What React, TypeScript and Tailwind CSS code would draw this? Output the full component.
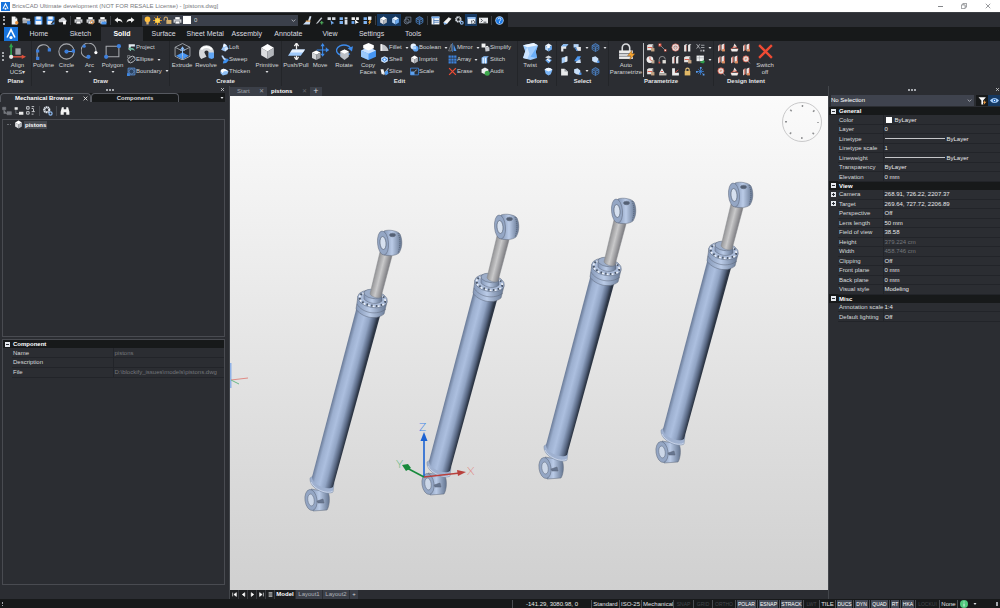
import type { ReactNode } from "react";
import clsx from "clsx";

const isoCube = (
  <>
    <path d="M8 1 14 4.4 8 8 2 4.4Z" fill="#fff" />
    <path d="M2 4.4 8 8v7L2 11.6Z" fill="#dcdde0" />
    <path d="M14 4.4 8 8v7l6-3.4Z" fill="#b3b6bb" />
  </>
);

const blueCube = (
  <>
    <path d="M8 1 14 4.4 8 8 2 4.4Z" fill="#e9f3ff" />
    <path d="M2 4.4 8 8v7L2 11.6Z" fill="#b5d6fb" />
    <path d="M14 4.4 8 8v7l6-3.4Z" fill="#6aa9f0" />
  </>
);

const printer = (
  <>
    <path d="M4 2h8v4H4Z" fill="#fff" />
    <path d="M1 6h14v6H1Z" fill="#d4d6da" />
    <path d="M4 9h8v5H4Z" fill="#fff" stroke="#4b4e55" />
  </>
);

const partBase = (
  <>
    <path d="M2 4 5 2h8l-2 3v8H2Z" fill="#e6e4e2" />
    <path d="M11 5l2-3v8l-2 3Z" fill="#a9a6a4" />
  </>
);

const icons: Record<string, ReactNode> = {
  brand: (
    <>
      <path d="M0 0h16v16H0Z" fill="#1673dc" />
      <path d="M3.500 12 8 3l4.500 9" fill="none" stroke="#fff" strokeWidth="1.800" />
      <circle cx="8" cy="12" r="1.800" fill="#fff" />
    </>
  ),
  newFile: (
    <>
      <path d="M3 1h6l4 4v10H3Z" fill="#f4f4f4" />
      <path d="M9 1v4h4Z" fill="#9a9da3" />
      <circle cx="12" cy="12" r="3" fill="#e8923c" />
    </>
  ),
  open: (
    <>
      <path d="M1 3h5l2 2h6v3H1Z" fill="#d8dade" />
      <path d="M1 13V6h14l-3 7Z" fill="#a7abb2" />
      <path d="M9 9h6v6H9Z" fill="#3f8ae8" />
    </>
  ),
  save: (
    <>
      <path d="M1 1h14v14H1Z" fill="#4b97f0" />
      <path d="M4 1h8v5H4ZM3 9h10v6H3Z" fill="#f2f6fc" />
    </>
  ),
  saveAs: (
    <>
      <path d="M1 1h14v14H1Z" fill="#4b97f0" />
      <path d="M4 1h8v5H4ZM3 9h8v6H3Z" fill="#f2f6fc" />
      <path d="m8 14 6-7 2 2-6 6Z" fill="#2f3238" />
    </>
  ),
  publish: (
    <>
      <path d="M1 9c0-4 3-4 4-4 1-3 7-3 8 1 3 0 3 5 0 5H2Z" fill="#cfd2d7" />
      <path d="M9 9h5v6H9Z" fill="#fff" />
    </>
  ),
  print: printer,
  printPreview: (
    <>
      {printer}
      <circle cx="11" cy="11" r="3" fill="none" stroke="#e8923c" strokeWidth="1.6" />
    </>
  ),
  plot: (
    <>
      {printer}
      <path d="M6 10h9v5H6Z" fill="#4b97f0" />
    </>
  ),
  undo: <path d="M1 7 7 2v3c5 0 8 2 8 7-2-3-4-3-8-3v3Z" fill="#f2f2f2" />,
  redo: <path d="M15 7 9 2v3c-5 0-8 2-8 7 2-3 4-3 8-3v3Z" fill="#f2f2f2" />,
  bulb: (
    <>
      <circle cx="8" cy="6" r="5" fill="#ffbf3c" />
      <path d="M6 10h4v5H6Z" fill="#e8b76b" />
    </>
  ),
  sun: (
    <>
      <path d="M8 0v16M0 8h16M2.500 2.500l11 11M13.500 2.500l-11 11" stroke="#f59d24" strokeWidth="1.500" />
      <circle cx="8" cy="8" r="4.500" fill="#ffd34d" />
    </>
  ),
  unlock: (
    <>
      <path d="M2 8V5a3 3 0 0 1 6 0v2" fill="none" stroke="#c7a46c" strokeWidth="2" />
      <path d="M6 7h9v7H6Z" fill="#d8b26e" />
    </>
  ),
  lock: (
    <>
      <path d="M5 8V5a3 3 0 0 1 6 0v3" fill="none" stroke="#e4c27a" strokeWidth="2" />
      <path d="M3 7h10v8H3Z" fill="#e2b866" />
    </>
  ),
  brush: (
    <>
      <path d="M12 0 9 8l3 2 3-9Z" fill="#d9e6f6" />
      <path d="M5 8h8v3H5Z" fill="#e0a258" />
      <path d="M0 15 5 10h8l-1 5Z" fill="#c9ddf5" />
    </>
  ),
  pencil: (
    <>
      <path d="m3 12 8-10 2 2-8 9-3 1Z" fill="#c4c9d0" />
      <path d="M9 12h6M12 9v6" stroke="#4fb05c" strokeWidth="2" />
    </>
  ),
  selectA: (
    <>
      <path d="M1 2h6v5H1ZM9 2h6v5H9Z" fill="#d8dde4" />
      <path d="m6 7 7 6-3 .5L8 16Z" fill="#73aef4" />
    </>
  ),
  selectB: (
    <>
      <path d="M1 2h6v5H1ZM1 9h6v5H1Z" fill="#7eb3f2" />
      <path d="M10 2h5v4h-5ZM10 7h5v8h-5Z" fill="#d8dde4" />
    </>
  ),
  selectC: (
    <>
      <path d="M1 2h6v5H1ZM9 2h5v5H9Z" fill="#f2f2f2" />
      <path d="M1 9h5v5H1Z" fill="#68a5f1" />
      <path d="m7 6 7 6-4 .5L8 15Z" fill="#fff" />
    </>
  ),
  selectD: (
    <>
      <path d="M1 2h6v5H1ZM1 9h6v5H1Z" fill="#7eb3f2" />
      <path d="M9 1h6v6H9Z" fill="#edf3fc" />
      <path d="M12 7 9 12h2l-1 4 5-6h-2l1-3Z" fill="#f0a83c" />
    </>
  ),
  cube: isoCube,
  cubeBlue: blueCube,
  cubeWire: (
    <>
      <path d="M8 1 14 4.500 8 8 2 4.500Z" fill="#3a5478" />
      <g fill="none" stroke="#4f8fdb" strokeWidth="1.300">
        <path d="M8 1 14 4.500v7L8 15l-6-3.500v-7Z" />
        <path d="M2 4.500 8 8l6-3.500M8 8v7M2 8l6 3.500L14 8" />
      </g>
    </>
  ),
  copySquares: (
    <g fill="none" stroke="#7d8ca3" strokeWidth="1.300">
      <path d="M5 2h9v9H5Z" />
      <circle cx="6.500" cy="9.500" r="4.500" />
    </g>
  ),
  panel: (
    <>
      <path d="M1 1h14v14H1Z" fill="#f4f7fb" />
      <path d="M1 1h14v3H1Z" fill="#77aef0" />
      <path d="M5 4v11M5 8h9M5 11h9" stroke="#3e6fae" strokeWidth="1.400" />
    </>
  ),
  eraser: (
    <>
      <path d="m1 11 9-9 5 3-8 9-5 1Z" fill="#f3f3f3" />
      <path d="m1 11 5 2 1 1-5 1Z" fill="#79b0ef" />
    </>
  ),
  gears: (
    <>
      <circle cx="6" cy="6" r="4" fill="none" stroke="#dde3eb" strokeWidth="3.500" strokeDasharray="2.200 .6" />
      <circle cx="12" cy="12" r="2.500" fill="none" stroke="#8db9ee" strokeWidth="2" />
    </>
  ),
  windowGear: (
    <>
      <path d="M1 2h14v12H1Z" fill="#edf3fb" />
      <path d="M1 2h14v3H1Z" fill="#86b7f1" />
      <circle cx="11" cy="11" r="3" fill="none" stroke="#4b4f56" strokeWidth="2" strokeDasharray="2 1" />
    </>
  ),
  terminal: (
    <>
      <path d="M0 3h16v10H0Z" fill="#e8eaed" />
      <path d="m3 5 3 3-3 3M8 11h5" fill="none" stroke="#33363c" strokeWidth="1.500" />
    </>
  ),
  help: (
    <>
      <circle cx="8" cy="8" r="7.500" fill="#a9cdf7" />
      <circle cx="8" cy="8" r="6" fill="#1d79e3" />
      <path d="M5.500 6c0-3 5-3 5 0 0 2-2.500 2-2.500 4m0 1v1.500" fill="none" stroke="#fff" strokeWidth="1.500" />
    </>
  ),
  axes: (
    <>
      <path d="M6 5h5v6H6Z" fill="#9b9ea4" />
      <path d="M2 14V3" stroke="#2fa24c" strokeWidth="1.600" />
      <path d="M0 4 2 0l2 4Z" fill="#2fa24c" />
      <path d="M2 13h11" stroke="#d4523e" strokeWidth="1.400" />
      <path d="m12 11 4 2-4 2Z" fill="#e0503c" />
      <circle cx="2" cy="13" r="2" fill="#e7e7e7" />
    </>
  ),
  polyline: (
    <>
      <path d="M2 15V8C2 1 11-1 14 6" fill="none" stroke="#a6a9ae" strokeWidth="1" />
      <path d="M1 6h3v3H1ZM1 13h3v3H1ZM12 5h3v3h-3Z" fill="#3d7fdc" />
    </>
  ),
  circle: (
    <>
      <circle cx="8" cy="8" r="7.200" fill="none" stroke="#a6a9ae" />
      <path d="M8 8h6" stroke="#6ba2ea" />
      <circle cx="8" cy="8" r="2" fill="#3d7fdc" />
      <path d="M13 6h3v3h-3Z" fill="#3d7fdc" />
    </>
  ),
  arc: (
    <>
      <path d="M6 14A7 7 0 1 1 14 8" fill="none" stroke="#a6a9ae" />
      <circle cx="7" cy="13" r="2" fill="#3d7fdc" />
      <circle cx="14" cy="9" r="1.500" fill="#fff" />
      <circle cx="3" cy="3" r="1.500" fill="#3d7fdc" />
    </>
  ),
  polygon: (
    <>
      <path d="M2 3h12v10H2Z" fill="none" stroke="#a6a9ae" />
      <circle cx="14" cy="3" r="2" fill="#3d7fdc" />
      <circle cx="2" cy="13" r="2" fill="#3d7fdc" />
    </>
  ),
  project: (
    <>
      <path d="M3 2h11v4H7v8L3 12Z" fill="#e4eaf1" />
      <path d="m2 10 5-4v3c4 0 6 1 7 5-3-2-4-2-7-2v2Z" fill="#6cb79d" />
    </>
  ),
  ellipse: (
    <>
      <ellipse cx="8" cy="8" rx="7" ry="5" fill="none" stroke="#c9ccd1" strokeWidth="1.400" transform="rotate(-35 8 8)" />
      <path d="M1 1h4v4H1ZM2 14 13 3" fill="none" stroke="#a6a9ae" />
    </>
  ),
  boundary: (
    <>
      <path d="M2 2h12v12H2Z" fill="none" stroke="#5a98e9" strokeWidth="1.500" />
      <circle cx="8" cy="8" r="4.500" fill="#2b4260" stroke="#7cb1f3" />
      <path d="M0 11h5v5H0Z" fill="#3e86e1" />
    </>
  ),
  extrude: (
    <>
      <path d="m2 12 6-3 6 3-6 3.500Z" fill="#4895f2" />
      <path d="M8 .5 15 4v8.500L8 16l-7-3.500V4ZM1 4l7 3.500L15 4M8 7.500V16" fill="none" stroke="#a9adb3" strokeWidth=".8" />
      <path d="M8 12V5M6 7l2-3 2 3" fill="none" stroke="#8dc0fb" />
    </>
  ),
  revolve: (
    <>
      <path d="M1 9a7 7 0 1 1 14 0v4h-5V9a2 2 0 0 0-4 0l2 4-5 2C1 13 1 11 1 9Z" fill="#d5d7da" />
      <path d="M10 9h5v5l-2 1-3-1Z" fill="#61a6f4" />
      <path d="M3 6a6 5 0 0 1 10 0" fill="none" stroke="#fff" strokeWidth="2" />
    </>
  ),
  loft: (
    <>
      <path d="m7 1 5 3 3 6-6 5-7-3 3-5Z" fill="#9ac5f7" />
      <path d="m7 1 5 3-4 3-3-1Z" fill="#f0f6fe" />
      <path d="m9 15 6-5-3-3-4 2Z" fill="#d8e8fb" />
    </>
  ),
  sweep: (
    <>
      <path d="M3 2c5 0 0 6 9 6" fill="none" stroke="#b8d6fa" strokeWidth="3" />
      <path d="m5 15 1-5 7-4 3 3-5 5Z" fill="#3e91f0" />
    </>
  ),
  thicken: (
    <>
      <path d="M1 7c3-6 8-5 14 1l-2 5-8 2-4-4Z" fill="#8fc0f7" />
      <path d="M1 7c3-6 8-5 14 1-6-2-9-1-10 3Z" fill="#fff" />
    </>
  ),
  pushPull: (
    <>
      <path d="M4 6h12l-4 6H0Z" fill="#9ec9fb" />
      <path d="M4 6h12l-2 3H2Z" fill="#e7f2ff" />
      <path d="M8 6V1M6 3l2-3 2 3M8 12v3M6 13l2 3 2-3" fill="none" stroke="#eee" strokeWidth="1.200" />
    </>
  ),
  move: (
    <>
      <path d="M10 1v11M4.500 6.500h11" stroke="#3d8bec" />
      <path d="m8 3 2-3 2 3ZM13 4l3 2.500L13 9ZM8 10l2 3 2-3Z" fill="#3d8bec" />
      <path d="m4 7 4 2-4 2-4-2Z" fill="#fff" />
      <path d="m0 9 4 2v5l-4-2Z" fill="#d3d5d8" />
      <path d="m8 9-4 2v5l4-2Z" fill="#a2a5aa" />
    </>
  ),
  rotate: (
    <>
      <path d="M14 5A7 5 0 1 0 13 10" fill="none" stroke="#3d8bec" strokeWidth="1.300" />
      <path d="m16 3-1 5-4-3Z" fill="#3d8bec" />
      <path d="m8 6 4 2v5l-4 3-4-3V8Z" fill="#bcc0c6" />
      <path d="m8 6 4 2-4 2-4-2Z" fill="#fff" />
    </>
  ),
  copyFaces: (
    <>
      <path d="m8 4 7 3v6l-7 3-7-3V7Z" fill="#4696f4" />
      <path d="m8 4 7 3-7 3-7-3Z" fill="#c7e0ff" />
      <path d="m8 0 5 2v3L8 7 3 5V2Z" fill="#fff" />
      <path d="m1 7 7 3v6l-7-3Z" fill="#9bc9fc" />
    </>
  ),
  fillet: (
    <>
      <path d="M1 2c8 0 13 5 14 12H1Z" fill="#c2c5ca" />
      <path d="M1 2h3v12H1Z" fill="#f2f2f2" />
    </>
  ),
  shell: (
    <>
      <path d="m8 2 6 3v6l-6 3-6-3V5Z" fill="#cde2fb" />
      <path d="m8 4 5 4-5 4-5-4Z" fill="#3287ec" />
      <circle cx="8" cy="8" r="2" fill="#f5f9ff" />
    </>
  ),
  slice: (
    <>
      <path d="M1 4h5l3 9H3Z" fill="#f2f2f2" />
      <path d="m15 2-9 12" stroke="#aeb1b6" strokeWidth="2" />
      <path d="m8 9 6-3 1 6-5 3Z" fill="#4e9af0" />
    </>
  ),
  boolean: (
    <>
      <circle cx="6" cy="6" r="5" fill="#e7f1fd" />
      <circle cx="10" cy="10" r="5" fill="#5ea5f4" />
      <path d="M5 6h6v5H5Z" fill="#b4d5fa" />
    </>
  ),
  scale: (
    <>
      <path d="M1 2h14v12H1Z" fill="none" stroke="#3e86df" strokeWidth="1.500" />
      <path d="M1 8h7v6H1Z" fill="#5fa3f0" />
      <path d="m8 8 4-3" stroke="#fff" />
    </>
  ),
  mirror: (
    <>
      <path d="M6 2v12H1Z" fill="none" stroke="#9da2aa" />
      <path d="M10 2v12h5Z" fill="#4c95ee" />
      <path d="M8 0v16" stroke="#4c95ee" />
    </>
  ),
  array: (
    <path
      d="M1 1h4v4H1ZM6 1h4v4H6ZM11 1h4v4h-4ZM1 6h4v4H1ZM6 6h4v4H6ZM11 6h4v4h-4ZM1 11h4v4H1ZM6 11h4v4H6ZM11 11h4v4h-4Z"
      fill="#3d83dd"
    />
  ),
  cross: <path d="m2 2 12 12M14 2 2 14" stroke="#ef4b34" strokeWidth="2.200" />,
  simplify: (
    <>
      <path d="M1 1h7v7H1Z" fill="#f3f3f3" />
      <path d="m7 7 8 1v6l-7 1Z" fill="#c9ccd2" />
      <path d="m7 7 4-2 4 3Z" fill="#fff" />
    </>
  ),
  stitch: (
    <>
      <path d="M1 5 5 2h9l-3 3v10H1Z" fill="#8ebff7" />
      <path d="M4 5v10M8 5v10" stroke="#fff" strokeWidth="1.500" />
    </>
  ),
  audit: (
    <>
      <path d="m7 1 6 3v6l-6 3-6-3V4Z" fill="#eceef0" />
      <circle cx="11" cy="11" r="4.500" fill="#3da84c" />
    </>
  ),
  twist: (
    <>
      <path d="m1 2 10-2 4 2-2 6 1 6-6 2-7-2 2-6Z" fill="#9ecbfc" />
      <path d="m1 2 10-2 4 2-10 2Z" fill="#eef6ff" />
      <path d="m5 4 2 6-2 5-4-1 2-6Z" fill="#cde4ff" />
      <path d="m15 2-7 11 6 1-1-6Z" fill="#6aaef8" />
    </>
  ),
  deformA: (
    <>
      {blueCube}
      <circle cx="8" cy="7" r="2.500" fill="#fff" />
    </>
  ),
  deformB: (
    <>
      <path d="m8 1 6 3-6 3-6-3Z" fill="#cdd2d8" />
      <path d="m8 6 6 3-6 6-6-6Z" fill="#6caaf0" />
      <path d="m5 7 6 4" stroke="#fff" strokeWidth="2" />
    </>
  ),
  deformC: (
    <>
      <path d="M1 5c4-5 10-5 14 0l-3 8-4 2-5-3Z" fill="#7bb5f6" />
      <path d="M1 5c4-5 10-5 14 0l-7 3Z" fill="#f0f7ff" />
    </>
  ),
  faceA: (
    <>
      <path d="M2 6 6 2h9l-4 4v4H6v5H2Z" fill="#e6e8eb" />
      <path d="m6 2 9 0-4 4H2Z" fill="#81b8f5" />
    </>
  ),
  faceB: (
    <>
      <path d="m3 5 10-3v9L3 15Z" fill="#a9cff8" />
      <path d="m9 3 4-1v9l-4 2Z" fill="#e7eaee" />
    </>
  ),
  faceC: (
    <>
      <path d="M2 3h6l6 5v7H2Z" fill="#e9eaec" />
      <path d="m8 3 6 5h-6Z" fill="#9a9ea5" />
    </>
  ),
  faceD: (
    <>
      <path d="M1 2h9v6H1Z" fill="#b7d6f9" />
      <path d="M6 7h8v7H6Z" fill="#e9eaec" />
      <path d="m3 8 5 6" stroke="#478fe8" strokeWidth="2" />
    </>
  ),
  faceE: (
    <>
      <path d="M2 11 8 2h6l-4 9Z" fill="#4e97ee" />
      <path d="m5 12 8-5 1 7H5Z" fill="#c9dcf3" />
    </>
  ),
  faceF: (
    <>
      <path d="M2 4 8 2l5 4v8l-7-1-4-3Z" fill="#c8dff9" />
      <path d="M11 10h4v4h-4Z" fill="#4d93e8" />
    </>
  ),
  paramAuto: (
    <>
      <path d="M4 8V4.500a3.500 3.500 0 0 1 7 0V8" fill="none" stroke="#d8dadd" strokeWidth="1.500" />
      <path d="M1 7h13v8H1Z" fill="#ececec" />
      <path d="M1 10h13M1 12.500h13" stroke="#85888e" />
      <path d="m13 7-4 5h3l-1 4 5-6h-3Z" fill="#f7a52f" stroke="#7b4b18" strokeWidth=".4" />
    </>
  ),
  partRed: (
    <>
      {partBase}
      <path d="M3 8h8" stroke="#dc4938" strokeWidth="1.500" />
      <path d="M9 9h6v6H9Z" fill="#c4a382" />
    </>
  ),
  link: (
    <>
      <path d="m3 3 10 10" stroke="#9da0a6" strokeWidth="1.300" />
      <path d="M1 1h5v5H1ZM11 11h4v4h-4Z" fill="#e55845" />
      <path d="M2 2h2v2H2ZM12 12h2v2h-2Z" fill="#fff" />
    </>
  ),
  ring: (
    <>
      <circle cx="8" cy="8" r="6.500" fill="#e6e6e6" stroke="#cf4b3d" />
      <circle cx="8" cy="8" r="3" fill="none" stroke="#c46155" strokeWidth="1.200" />
      <path d="M5 7h6" stroke="#777" />
    </>
  ),
  columns: (
    <>
      <path d="m2 4 3-2h3l-2 2v11H2ZM9 4l2-2h4l-2 2v11H9Z" fill="#e6e6e6" />
      <path d="M6 4v10" stroke="#ce584a" />
    </>
  ),
  dial: (
    <>
      <circle cx="7" cy="8" r="6" fill="#eeeded" />
      <path d="M7 8V3M7 8l5 3" stroke="#df5142" strokeWidth="1.500" />
      <path d="M10 9h5v6h-5Z" fill="#c2ad96" />
    </>
  ),
  arch: (
    <>
      <path d="M2 13V8a5 5 0 0 1 11 0" fill="none" stroke="#9d9da0" strokeWidth="1.500" />
      <path d="M8 9h6v6H8Z" fill="#e0ded9" />
      <path d="M1 12h3v3H1Z" fill="#df5142" />
    </>
  ),
  corner: (
    <>
      <path d="M2 2h5v8h7v5H2Z" fill="#ececec" />
      <path d="m7 10 6-5" stroke="#df5142" strokeWidth="1.500" />
    </>
  ),
  cone: (
    <>
      <path d="m7 2 5 9H2Z" fill="#eee" />
      <path d="M2 11h13v4H2Z" fill="#bcb5ad" />
      <path d="M5 8h4" stroke="#df5142" strokeWidth="1.500" />
    </>
  ),
  formula: (
    <>
      <path d="m1 2 6 8M7 2l-6 8M9 4h6M9 8h6" stroke="#c6c8cc" strokeWidth="1.300" />
      <path d="M8 12h2v3H8ZM12 12h3v3h-3Z" fill="#c6c8cc" />
    </>
  ),
  table: (
    <>
      <path d="M1 1h13v10H1Z" fill="#eef0f2" />
      <path d="M1 5h13M6 1v10" stroke="#8e949b" />
      <path d="M8 11h4V8l4 4-4 4v-2H8Z" fill="#2fa24c" />
    </>
  ),
  snow: (
    <>
      <path d="M8 2v12M2 8h12M4 4l8 8M12 4l-8 8" stroke="#3d87e2" strokeWidth="1.300" />
      <path d="M7 0h3v3H7ZM0 7h3v3H0ZM12 12h3v3h-3Z" fill="#5b9ff0" />
    </>
  ),
  intentA: (
    <>
      <path d="m2 5 4-3v10l-4 3ZM8 3l5-2v10l-5 3Z" fill="#eee7e4" />
      <path d="M5 3v11M13 3v11" stroke="#d8452f" strokeWidth="1.500" />
      <path d="M9 11h5v4H9Z" fill="#e09060" />
    </>
  ),
  intentB: (
    <>
      <path d="m8 1 4 5-3 3H5Z" fill="#e8dfda" />
      <path d="M1 10h14l-2 5H3Z" fill="#efecea" />
      <path d="M2 11c3-5 9-5 12 0" fill="none" stroke="#dd4c38" strokeWidth="1.700" />
    </>
  ),
  intentC: (
    <>
      <circle cx="7" cy="7" r="5.500" fill="#e8e0dc" stroke="#d94a36" strokeWidth="1.300" />
      <path d="m7 7 7 8M5 5h4v4H5Z" fill="#cf7b5e" stroke="#e0e0e0" />
    </>
  ),
  treeA: <path d="M1 2h5v4H1ZM8 9h7v5H8ZM3 6v6h5" fill="#74777d" stroke="#74777d" />,
  treeB: (
    <>
      <path d="M3 6v6h5" fill="none" stroke="#85888e" />
      <path d="M1 2h5v4H1ZM8 9h7v5H8Z" fill="#e9e9e9" />
    </>
  ),
  treeC: <path d="M1 1h4v4H1ZM1 9h4v4H1ZM9 1h4M9 4h3M9 9h5M9 13h3M12 5v4" fill="none" stroke="#c5c7cb" strokeWidth="1.600" />,
  binoculars: <path d="M3 2h3v3h4V2h3l2 7v5h-5v-4H6v4H1V9Z" fill="#f2f2f2" />,
  filter: (
    <>
      <path d="M1 2h13L9 8v7H6V8Z" fill="#fafafa" />
      <path d="m12 7-3 5h2l-1 4 5-6h-3Z" fill="#ee9c43" />
    </>
  ),
  eye: (
    <>
      <path d="M0 8c4-6 12-6 16 0-4 6-12 6-16 0Z" fill="#a9cef9" />
      <circle cx="8" cy="8" r="3" fill="#1d5fae" />
      <circle cx="8" cy="8" r="1.200" fill="#fff" />
    </>
  ),
};

function Icon({ name, className = "size-[10px]" }: { name: string; className?: string }) {
  return (
    <svg viewBox="0 0 16 16" aria-hidden="true" className={clsx("shrink-0", className)}>
      {icons[name]}
    </svg>
  );
}

function Caret({ className }: { className?: string }) {
  return (
    <svg viewBox="0 0 6 4" aria-hidden="true" className={clsx("h-[2px] w-[4px] shrink-0", className)}>
      <path d="M0 0h6L3 4Z" fill="#e0e1e3" />
    </svg>
  );
}

function Grip({ className }: { className?: string }) {
  return <span className={clsx("block shrink-0 border-dotted border-[#a5a8ad]", className)} />;
}

function TitleBar() {
  return (
    <header className="flex h-3 shrink-0 items-center bg-white pl-px text-[#77797d]">
      <Icon name="brand" className="size-[9px]" />
      <h1 className="ml-[2px] whitespace-nowrap text-[6px] leading-[9px]">
        BricsCAD Ultimate development (NOT FOR RESALE License) - [pistons.dwg]
      </h1>
      <div className="ml-auto flex">
        <button type="button" aria-label="Minimize" className="flex h-3 w-[23px] items-center justify-center">
          <span className="h-px w-[5px] bg-[#85878b]" />
        </button>
        <button type="button" aria-label="Restore" className="flex h-3 w-[23px] items-center justify-center">
          <svg viewBox="0 0 8 8" className="size-[6px]" fill="none" stroke="#77797d">
            <path d="M.5 2.500h5v5h-5ZM2.500 2.500v-2h5v5h-2" />
          </svg>
        </button>
        <button type="button" aria-label="Close" className="flex h-3 w-[25px] items-center justify-center">
          <svg viewBox="0 0 8 8" className="size-[6px]" stroke="#77797d">
            <path d="m1 1 6 6M7 1 1 7" />
          </svg>
        </button>
      </div>
    </header>
  );
}

const fileTools = ["newFile", "open", "save", "saveAs", "publish"];
const printTools = ["print", "printPreview", "plot"];
const historyTools = ["undo", "redo"];
const entityTools = ["brush", "pencil", "selectA", "selectB", "selectC", "selectD"];
const viewTools = ["cube", "cubeBlue", "copySquares", "cubeWire"];
const panelTools = ["panel", "eraser", "gears", "windowGear", "terminal"];

function ToolSet({ names, active = [], divided = true }: { names: string[]; active?: string[]; divided?: boolean }) {
  return (
    <>
      {divided && <span className="mx-[1px] h-[9px] w-[2px] border-r border-[#3b3e43]" />}
      {names.map((name) => (
        <button
          key={name}
          type="button"
          aria-label={name}
          className={clsx("flex h-3 w-3 shrink-0 items-center justify-center", active.includes(name) && "bg-[#163962]")}
        >
          <Icon name={name} className="size-[9px]" />
        </button>
      ))}
    </>
  );
}

function QuickAccess() {
  return (
    <div className="flex h-[15px] shrink-0 border-t border-[#3b3e43] bg-[#2b2d32]">
      <div className="flex items-center bg-[#17191a] pr-[3px]">
        <Grip className="mx-[3px] h-[9px] border-l-2" />
        <ToolSet names={fileTools} divided={false} />
        <ToolSet names={printTools} />
        <ToolSet names={historyTools} />
        <div className="ml-[6px] mr-[3px] flex h-[11px] w-[156px] items-center bg-[#3b404b] pl-px">
          {["bulb", "sun", "unlock", "print"].map((name) => (
            <Icon key={name} name={name} className="mr-px size-[9px]" />
          ))}
          <span className="size-[8px] bg-white" />
          <select aria-label="Layer" className="ml-[3px] h-[11px] min-w-0 flex-1 appearance-none bg-transparent p-0 leading-[9px]">
            <option>0</option>
          </select>
          <ChevronDown />
        </div>
        <ToolSet names={entityTools} divided={false} />
        <ToolSet names={viewTools} active={["cube", "cubeBlue"]} />
        <ToolSet names={panelTools} active={["windowGear"]} />
        <ToolSet names={["help"]} />
      </div>
    </div>
  );
}

function ChevronDown() {
  return (
    <svg viewBox="0 0 8 5" className="mr-[2px] h-[3px] w-[5px] shrink-0" fill="none" stroke="#b4b7bc" strokeWidth="1.500">
      <path d="m1 1 3 3 3-3" />
    </svg>
  );
}

const ribbonTabs = ["Home", "Sketch", "Solid", "Surface", "Sheet Metal", "Assembly", "Annotate", "View", "Settings", "Tools"];

function RibbonTabs() {
  return (
    <nav className="flex h-[14px] shrink-0 items-stretch bg-[#17191a] pl-[4px]">
      <button type="button" aria-label="BricsCAD menu" className="w-[14px]">
        <Icon name="brand" className="size-[14px]" />
      </button>
      <div role="tablist" className="flex w-[416px]">
        {ribbonTabs.map((tab) => (
          <button
            key={tab}
            type="button"
            role="tab"
            aria-selected={tab === "Solid"}
            className={clsx(
              "flex-1 basis-0 whitespace-nowrap text-[7px] leading-[14px]",
              tab === "Solid" ? "bg-[#2b2d32] font-bold text-white" : "text-[#dcdde0]",
            )}
          >
            {tab}
          </button>
        ))}
      </div>
    </nav>
  );
}

function Group({ title, className, children }: { title: string; className: string; children: ReactNode }) {
  return (
    <section className={clsx("flex shrink-0 flex-col border-r border-[#232529]", className)}>
      <div className="flex h-[36px]">{children}</div>
      <h2 className="text-center text-[6px] font-bold leading-[8px] text-[#e4e5e7]">{title}</h2>
    </section>
  );
}

function BigButton({ icon, label, menu, className = "w-6" }: { icon: string; label: string; menu?: boolean; className?: string }) {
  return (
    <button type="button" className={clsx("flex shrink-0 flex-col items-center pt-[2px]", className)}>
      <Icon name={icon} className="size-[17px]" />
      <span className="mt-[2px] whitespace-pre text-center leading-[7px]">{label}</span>
      {menu && <Caret className="mt-[2px]" />}
    </button>
  );
}

type Command = [icon: string, label: string, menu?: boolean];

function Column({ items, className }: { items: Command[]; className?: string }) {
  return (
    <div className={clsx("flex shrink-0 flex-col pt-px", className)}>
      {items.map(([icon, label, menu], index) => (
        <button
          key={index}
          type="button"
          aria-label={label || icon}
          className="flex h-[12px] items-center whitespace-nowrap leading-[9px]"
        >
          <Icon name={icon} className="size-[9px]" />
          {label}
          {menu && <Caret className="ml-[3px]" />}
        </button>
      ))}
    </div>
  );
}

function Ribbon() {
  return (
    <div className="flex h-[45px] shrink-0 overflow-hidden bg-[#2b2d32]">
      <Group title="Plane" className="w-8">
        <Grip className="ml-[2px] mt-[11px] h-[9px] border-l-2" />
        <BigButton icon="axes" label={"Align\nUCS▾"} className="w-[27px]" />
      </Group>
      <Group title="Draw" className="w-[138px]">
        <BigButton icon="polyline" label="Polyline" menu className="w-[23px]" />
        <BigButton icon="circle" label="Circle" menu className="w-[23px]" />
        <BigButton icon="arc" label="Arc" menu className="w-[23px]" />
        <BigButton icon="polygon" label="Polygon" menu className="w-[23px]" />
        <Column className="ml-[3px]" items={[["project", "Project"], ["ellipse", "Ellipse", true], ["boundary", "Boundary", true]]} />
      </Group>
      <Group title="Create" className="w-[112px]">
        <BigButton icon="extrude" label="Extrude" />
        <BigButton icon="revolve" label="Revolve" />
        <Column className="ml-[2px] w-[35px]" items={[["loft", "Loft"], ["sweep", "Sweep"], ["thicken", "Thicken"]]} />
        <BigButton icon="cube" label="Primitive" menu />
      </Group>
      <Group title="Edit" className="w-[236px]">
        <span className="w-[2px] shrink-0" />
        <BigButton icon="pushPull" label="Push/Pull" />
        <BigButton icon="move" label="Move" />
        <BigButton icon="rotate" label="Rotate" />
        <BigButton icon="copyFaces" label={"Copy\nFaces"} />
        <Column className="w-[30px]" items={[["fillet", "Fillet", true], ["shell", "Shell"], ["slice", "Slice"]]} />
        <Column className="w-[38px]" items={[["boolean", "Boolean", true], ["cube", "Imprint"], ["scale", "Scale"]]} />
        <Column className="w-[33px]" items={[["mirror", "Mirror", true], ["array", "Array", true], ["cross", "Erase"]]} />
        <Column items={[["simplify", "Simplify"], ["stitch", "Stitch"], ["audit", "Audit"]]} />
      </Group>
      <Group title="Deform" className="w-[39px]">
        <BigButton icon="twist" label="Twist" />
        <Column className="ml-[2px]" items={[["deformA", ""], ["deformB", ""], ["deformC", ""]]} />
      </Group>
      <Group title="Select" className="w-[52px]">
        <Column className="ml-[3px] w-[13px]" items={[["faceA", ""], ["faceB", ""], ["faceC", ""]]} />
        <Column className="w-[18px]" items={[["faceD", "", true], ["faceE", ""], ["faceF", "", true]]} />
        <Column items={[["cubeWire", "", true], ["faceF", ""], ["cubeWire", ""]]} />
      </Group>
      <Group title="Parametrize" className="w-[105px]">
        <BigButton icon="paramAuto" label={"Auto\nParametrize"} className="w-[34px]" />
        <span className="mt-[2px] h-[34px] w-px shrink-0 bg-[#b9bbbf]" />
        <Column className="ml-[2px] w-[12px]" items={[["partRed", ""], ["dial", ""], ["partRed", ""]]} />
        <Column className="w-[13px]" items={[["link", ""], ["arch", ""], ["cone", ""]]} />
        <Column className="w-[12px]" items={[["ring", ""], ["columns", ""], ["corner", ""]]} />
        <Column className="w-[13px]" items={[["columns", ""], ["partRed", ""], ["lock", ""]]} />
        <Column items={[["formula", "", true], ["table", "", true], ["snow", ""]]} />
      </Group>
      <Group title="Design Intent" className="w-[64px] border-r-0">
        <Column className="ml-[3px] w-[13px]" items={[["intentA", ""], ["intentA", ""], ["intentC", ""]]} />
        <Column className="w-[12px]" items={[["intentB", ""], ["intentA", ""], ["intentB", ""]]} />
        <Column className="w-[11px]" items={[["intentA", ""], ["intentC", ""], ["intentA", ""]]} />
        <BigButton icon="cross" label={"Switch\noff"} />
      </Group>
    </div>
  );
}

function DockHandle() {
  return (
    <div className="flex h-[7px] shrink-0 items-center">
      <span className="flex flex-1 justify-center">
        <Grip className="w-[8px] border-t-2" />
      </span>
      <button type="button" aria-label="Close panel" className="flex w-[5px] justify-center">
        <svg viewBox="0 0 6 6" className="size-[3px]" stroke="#d4d5d7" strokeWidth="1.500">
          <path d="m0 0 6 6M6 0 0 6" />
        </svg>
      </button>
    </div>
  );
}

function Toggle({ open }: { open: boolean }) {
  return (
    <svg viewBox="0 0 5 5" className="size-[5px]">
      <path d="M0 0h5v5H0Z" fill="#e6e9ee" />
      <path d={open ? "M1 2.500h3" : "M1 2.500h3M2.500 1v3"} stroke="#2d3138" />
    </svg>
  );
}

type Row = { name: string; value?: ReactNode; head?: boolean; muted?: boolean; expand?: boolean };

function PropertyTable({ rows, className, nameWidth }: { rows: Row[]; className: string; nameWidth: string }) {
  return (
    <table className={clsx("w-full table-fixed border-collapse text-[6px] leading-[8px]", className)}>
      <colgroup>
        <col className="w-[9px]" />
        <col className={nameWidth} />
        <col />
      </colgroup>
      <tbody>
        {rows.map((row) =>
          row.head ? (
            <tr key={row.name} className="bg-[#17191a]">
              <td className="p-0 pl-[2px]">
                <Toggle open />
              </td>
              <th colSpan={2} scope="colgroup" className="whitespace-nowrap p-0 pl-px text-left font-bold text-white">
                {row.name}
              </th>
            </tr>
          ) : (
            <tr key={row.name}>
              <td className="p-0 pl-[2px]">{row.expand && <Toggle open={false} />}</td>
              <th
                scope="row"
                className="whitespace-nowrap border-b border-r border-[#222429] p-0 pl-px text-left font-normal text-[#dadbdd]"
              >
                {row.name}
              </th>
              <td
                className={clsx(
                  "overflow-hidden whitespace-nowrap border-b border-[#222429] p-0 pl-px",
                  row.muted ? "text-[#74777c]" : "text-[#e9eaec]",
                )}
              >
                {row.value}
              </td>
            </tr>
          ),
        )}
      </tbody>
    </table>
  );
}

const componentRows: Row[] = [
  { name: "Component", head: true },
  { name: "Name", value: "pistons", muted: true },
  { name: "Description", value: "", muted: true },
  { name: "File", value: "D:\\blockify_issues\\models\\pistons.dwg", muted: true },
];

function MechanicalBrowser() {
  return (
    <aside className="flex w-[229px] shrink-0 flex-col pr-[4px]">
      <DockHandle />
      <div role="tablist" className="flex h-[9px] shrink-0 items-end bg-[#17191a] font-bold leading-[8px]">
        <button
          type="button"
          role="tab"
          aria-selected="true"
          className="flex h-[9px] w-[91px] items-center justify-between whitespace-nowrap rounded-t-[4px] border border-b-0 border-[#565960] bg-[#2b2d32] pl-[14px] pr-[2px] text-white"
        >
          Mechanical Browser
          <svg viewBox="0 0 8 8" className="size-[5px]" stroke="#eee" strokeWidth="1.300">
            <path d="m1 1 6 6M7 1 1 7" />
          </svg>
        </button>
        <button
          type="button"
          role="tab"
          aria-selected="false"
          className="h-[9px] w-[88px] rounded-t-[4px] border border-b-0 border-[#565960] leading-[8px] text-[#dcdddf]"
        >
          Components
        </button>
        <Caret className="mb-[3px] ml-auto mr-px" />
      </div>
      <div className="flex h-[17px] shrink-0 items-center gap-[2px] pl-[2px]">
        {["treeA", "treeB", "treeC", "|", "gears", "|", "binoculars"].map((name, index) =>
          name === "|" ? (
            <span key={index} className="mx-px h-[10px] w-px bg-[#44474d]" />
          ) : (
            <button key={index} type="button" aria-label={name}>
              <Icon name={name} />
            </button>
          ),
        )}
      </div>
      <div className="ml-[2px] flex-[218] basis-0 border border-[#494b51]">
        <div className="flex items-center pl-[4px] leading-[9px]">
          <span className="mr-[3px] w-[4px] border-t border-dotted border-[#6a6d73]" />
          <Icon name="cube" className="size-[9px]" />
          <span className="ml-px bg-[#45484f] px-px font-bold leading-[8px] text-white">pistons</span>
        </div>
      </div>
      <div className="mb-[14px] ml-[2px] mt-[2px] flex-[247] basis-0 border border-[#494b51]">
        <PropertyTable rows={componentRows} className="h-[38px]" nameWidth="w-[101px]" />
      </div>
    </aside>
  );
}

const lineSample = (
  <span className="flex items-center">
    <span className="mr-[2px] w-[60px] border-t border-[#c5c6c9]" />
    ByLayer
  </span>
);

const propertyRows: Row[] = [
  { name: "General", head: true },
  {
    name: "Color",
    value: (
      <span className="flex items-center">
        <span className="ml-px mr-[3px] size-[6px] bg-white" />
        ByLayer
      </span>
    ),
  },
  { name: "Layer", value: "0" },
  { name: "Linetype", value: lineSample },
  { name: "Linetype scale", value: "1" },
  { name: "Lineweight", value: lineSample },
  { name: "Transparency", value: "ByLayer" },
  { name: "Elevation", value: "0 mm" },
  { name: "View", head: true },
  { name: "Camera", value: "268.91, 726.22, 2207.37", expand: true },
  { name: "Target", value: "269.64, 727.72, 2206.89", expand: true },
  { name: "Perspective", value: "Off" },
  { name: "Lens length", value: "50 mm" },
  { name: "Field of view", value: "38.58" },
  { name: "Height", value: "379.224 cm", muted: true },
  { name: "Width", value: "458.746 cm", muted: true },
  { name: "Clipping", value: "Off" },
  { name: "Front plane", value: "0 mm" },
  { name: "Back plane", value: "0 mm" },
  { name: "Visual style", value: "Modeling" },
  { name: "Misc", head: true },
  { name: "Annotation scale", value: "1:4" },
  { name: "Default lighting", value: "Off" },
];

function PropertiesPanel() {
  return (
    <aside className="flex w-[171px] shrink-0 flex-col">
      <DockHandle />
      <div className="flex h-[14px] shrink-0 items-center pl-[2px]">
        <div className="flex h-[11px] flex-1 items-center bg-[#3f434e]">
          <select aria-label="Selection" className="h-[11px] min-w-0 flex-1 appearance-none bg-transparent p-0 leading-[9px] text-white">
            <option>No Selection</option>
          </select>
          <ChevronDown />
        </div>
        <button type="button" aria-label="Quick select" className="ml-[2px] flex h-[11px] w-3 items-center justify-center bg-[#17191a]">
          <Icon name="filter" className="size-[9px]" />
        </button>
        <button type="button" aria-label="Highlight" className="flex h-[11px] w-3 items-center justify-center bg-[#163962]">
          <Icon name="eye" className="size-[9px]" />
        </button>
      </div>
      <PropertyTable rows={propertyRows} className="h-[215px]" nameWidth="w-[45px]" />
    </aside>
  );
}

function Piston() {
  return (
    <g id="piston" stroke="#5c6779" strokeWidth=".5">
      {/* lower eye */}
      <path d="M311 489 328 492c2 4 2 13-1 18l-14 1Z" fill="url(#collar)" />
      <ellipse cx="311" cy="500" rx="6" ry="10.500" fill="#94a6c4" transform="rotate(-8 311 500)" />
      <ellipse cx="311" cy="500" rx="3.200" ry="6" fill="#ccd7e8" transform="rotate(-8 311 500)" />
      <path d="m317 501 6-2 1 4h-6Z" fill="#66758f" />
      {/* barrel */}
      <path d="M310 478c-1 11 17 18 23 14l1-9-21-7Z" fill="#9fb1d0" stroke="#7d8ca4" />
      <path d="M357 306 312 477c0 8 16 14 21 10l47-171Z" fill="url(#barrel)" stroke="none" />
      <path d="M311 482c3 7 16 13 22 9" fill="none" stroke="#d0dbed" strokeWidth=".8" />
      {/* flange */}
      <path d="M358 296 356 309c5 8 20 12 28 5l3-12Z" fill="url(#collar)" />
      <path d="M357 304c5 9 20 12 29 5" fill="none" />
      <ellipse cx="372.500" cy="299" rx="15" ry="8.500" fill="#a9bad7" transform="rotate(10 372.500 299)" />
      <ellipse
        cx="372.500"
        cy="299"
        rx="13"
        ry="6.700"
        fill="none"
        stroke="#4e596a"
        strokeWidth="2"
        strokeDasharray="1.600 3.200"
        transform="rotate(10 372.500 299)"
      />
      <ellipse
        cx="372.500"
        cy="299.500"
        rx="13"
        ry="6.700"
        fill="none"
        stroke="#eff3f9"
        strokeWidth="1.600"
        strokeDasharray="1.800 3"
        strokeDashoffset="2"
        transform="rotate(10 372.500 299)"
      />
      <path d="M364 292v7c5 5 14 6 18 2v-6Z" fill="url(#collar)" />
      <ellipse cx="373" cy="294" rx="9" ry="4.500" fill="#9cadc9" transform="rotate(10 373 294)" />
      {/* rod */}
      <path d="m380 252 12 4-11 41c-3 2-9 0-11-3Z" fill="url(#rod)" stroke="#85868a" />
      {/* upper eye */}
      <path d="M384 231c5-2 14 0 16 3 3 7 2 14-1 19-4 3-10 3-15 2Z" fill="url(#collar)" />
      <path d="M398 233c3 7 2 14 0 20" fill="none" stroke="#303a48" strokeDasharray="1 1" />
      <ellipse cx="383" cy="243" rx="5.500" ry="12" fill="#94a6c4" transform="rotate(-5 383 243)" />
      <ellipse cx="383" cy="243" rx="3" ry="6.500" fill="#d6e0ef" stroke="#3d4756" transform="rotate(-5 383 243)" />
      <ellipse cx="392.500" cy="235" rx="3" ry="1.800" fill="#546074" />
    </g>
  );
}

function Viewport() {
  return (
    <svg
      viewBox="230 96 598 494"
      role="img"
      aria-label="Four hydraulic pistons"
      className="min-h-0 w-full flex-1 bg-linear-to-b from-[#fbfbfb] to-[#d0d0d0]"
    >
      <defs>
        <linearGradient id="barrel" gradientUnits="userSpaceOnUse" x1="335" y1="392" x2="356.500" y2="397.700">
          <stop offset="0" stopColor="#71829f" />
          <stop offset=".15" stopColor="#9cafcf" />
          <stop offset=".4" stopColor="#acbfdf" />
          <stop offset=".65" stopColor="#91a4c4" />
          <stop offset=".87" stopColor="#566580" />
          <stop offset="1" stopColor="#2c3544" />
        </linearGradient>
        <linearGradient id="collar">
          <stop offset="0" stopColor="#8396b6" />
          <stop offset=".45" stopColor="#bacbe7" />
          <stop offset="1" stopColor="#647590" />
        </linearGradient>
        <linearGradient id="rod" gradientUnits="userSpaceOnUse" x1="375" y1="275" x2="387" y2="278">
          <stop offset="0" stopColor="#99999b" />
          <stop offset=".4" stopColor="#c9c9ca" />
          <stop offset="1" stopColor="#727277" />
        </linearGradient>
      </defs>

      <Piston />
      <use href="#piston" x="117" y="-16" />
      <use href="#piston" x="234" y="-32" />
      <use href="#piston" x="351" y="-48" />

      <g fill="none">
        <circle cx="802" cy="122" r="19.500" stroke="#c9c9ca" />
        <circle cx="802" cy="122" r="16" stroke="#8f9092" strokeWidth="2" strokeDasharray="1.500 11.066" strokeDashoffset=".75" />
      </g>

      <path d="M230.500 363v25" stroke="#8fb2e8" strokeWidth="2" />
      <path d="m231 380 17-2" stroke="#e08b85" />
      <path d="m231 380 8 4" stroke="#68b98a" />

      <g strokeWidth="1.600">
        <path d="M424 477V437" stroke="#1c63d2" />
        <path d="m420.500 441 3.500-9 3.500 9Z" fill="#1c63d2" />
        <path d="m424 477-19-10" stroke="#168a3b" />
        <path d="m402 465 6-1 3 4-5 3Z" fill="#168a3b" />
        <path d="m424 477 36-4" stroke="#b8403c" />
        <path d="m457 470 9 2-8 4Z" fill="#b8403c" />
      </g>
      <g fontFamily="Lato, sans-serif" fontSize="12" fontWeight="300">
        <text x="419" y="431" fill="#4386e6">Z</text>
        <text x="396" y="468" fill="#60b97e">Y</text>
        <text x="467" y="475" fill="#e08783">X</text>
      </g>
    </svg>
  );
}

function Drawing() {
  return (
    <main className="flex min-w-0 flex-1 flex-col border-x border-[#43464b]">
      <div role="tablist" className="flex h-[10px] shrink-0 items-end gap-px leading-[9px]">
        <button type="button" role="tab" aria-selected="false" className="flex h-[9px] w-[37px] items-center justify-between bg-[#3b3f48] pl-[7px] pr-[3px] text-[#a2a5ab]">
          Start <span>✕</span>
        </button>
        <button type="button" role="tab" aria-selected="true" className="flex h-[9px] w-[41px] items-center justify-between pl-[3px] pr-[2px] font-bold text-white">
          pistons <span className="font-normal text-[#65686d]">✕</span>
        </button>
        <button type="button" aria-label="New drawing" className="h-[9px] w-[12px] bg-[#3b3f48] text-[9px] leading-[9px]">
          +
        </button>
      </div>
      <Viewport />
      <div className="flex h-[9px] shrink-0 items-center leading-[9px]">
        {["M1 1v6M7 1 3 4l4 3Z", "M6 1 2 4l4 3Z", "m2 1 4 3-4 3Z", "M7 1v6M1 1l4 3-4 3Z", "M1 1h6M1 3h6M1 5h6M1 7h6"].map((d) => (
          <button key={d} type="button" aria-label="Layout navigation" className="flex h-[9px] w-[9px] items-center justify-center border-r border-[#3a3c41] bg-[#1e2022]">
            <svg viewBox="0 0 8 8" className="size-[5px]" fill="#fff" stroke="#fff">
              <path d={d} />
            </svg>
          </button>
        ))}
        <button type="button" className="w-[20px] bg-[#1b1d1f] font-bold text-white">Model</button>
        <button type="button" className="ml-px w-[26px] bg-[#3b3f48] text-[#b0b3b8]">Layout1</button>
        <button type="button" className="ml-px w-[26px] bg-[#3b3f48] text-[#b0b3b8]">Layout2</button>
        <button type="button" aria-label="New layout" className="ml-px w-[8px] bg-[#3b3f48]">+</button>
      </div>
    </main>
  );
}

type Mode = "plain" | "on" | "off";

const statusFields: [label: string, mode: Mode, width: string][] = [
  ["Standard", "plain", "w-[28px]"],
  ["ISO-25", "plain", "w-[22px]"],
  ["Mechanical", "plain", "w-[32px]"],
  ["SNAP", "off", "w-[20px]"],
  ["GRID", "off", "w-[19px]"],
  ["ORTHO", "off", "w-[23px]"],
  ["POLAR", "on", "w-[22px]"],
  ["ESNAP", "on", "w-[22px]"],
  ["STRACK", "on", "w-[24px]"],
  ["LWT", "off", "w-[16px]"],
  ["TILE", "plain", "w-[16px]"],
  ["DUCS", "on", "w-[18px]"],
  ["DYN", "on", "w-[16px]"],
  ["QUAD", "on", "w-[20px]"],
  ["RT", "on", "w-[11px]"],
  ["HKA", "on", "w-[15px]"],
  ["LOCKUI", "off", "w-[24px]"],
  ["None", "plain", "w-[18px]"],
];

function StatusBar() {
  return (
    <footer className="flex h-[9px] shrink-0 items-center bg-[#17191a] leading-[8px]">
      <Grip className="ml-[2px] h-[4px] border-l" />
      <span className="ml-auto w-[79px] border-l border-[#4b4e53] text-center text-[#e8e8e8]">-141.29, 3080.98, 0</span>
      {statusFields.map(([label, mode, width]) => (
        <button
          key={label}
          type="button"
          aria-pressed={mode === "on"}
          className={clsx("shrink-0 whitespace-nowrap border-l border-[#4b4e53] px-px text-center", width)}
        >
          <span
            className={clsx(
              "block",
              mode === "on" && "bg-[#434956] text-[5px] text-white",
              mode === "off" && "text-[5px] text-[#45484d]",
              mode === "plain" && "text-[#e0e1e3]",
            )}
          >
            {label}
          </span>
        </button>
      ))}
      <button type="button" aria-label="Notifications" className="flex w-[13px] justify-center border-l border-[#4b4e53]">
        <svg viewBox="0 0 8 8" className="size-[8px]">
          <circle cx="4" cy="4" r="4" fill="#50c77c" />
          <path d="M4 1.500v1M4 3.500v3" stroke="#e3f7ea" />
        </svg>
      </button>
      <Caret className="ml-[3px] mr-[19px]" />
      <Grip className="mr-[2px] h-[4px] border-l-2" />
    </footer>
  );
}

export default function App() {
  return (
    <div className="flex h-screen flex-col overflow-hidden bg-[#2b2d32] font-['Liberation_Sans',Arial,sans-serif] text-[6px] leading-[9px] text-[#d3d5d8]">
      <TitleBar />
      <QuickAccess />
      <RibbonTabs />
      <Ribbon />
      <div className="flex min-h-0 flex-1">
        <MechanicalBrowser />
        <Drawing />
        <PropertiesPanel />
      </div>
      <StatusBar />
    </div>
  );
}
